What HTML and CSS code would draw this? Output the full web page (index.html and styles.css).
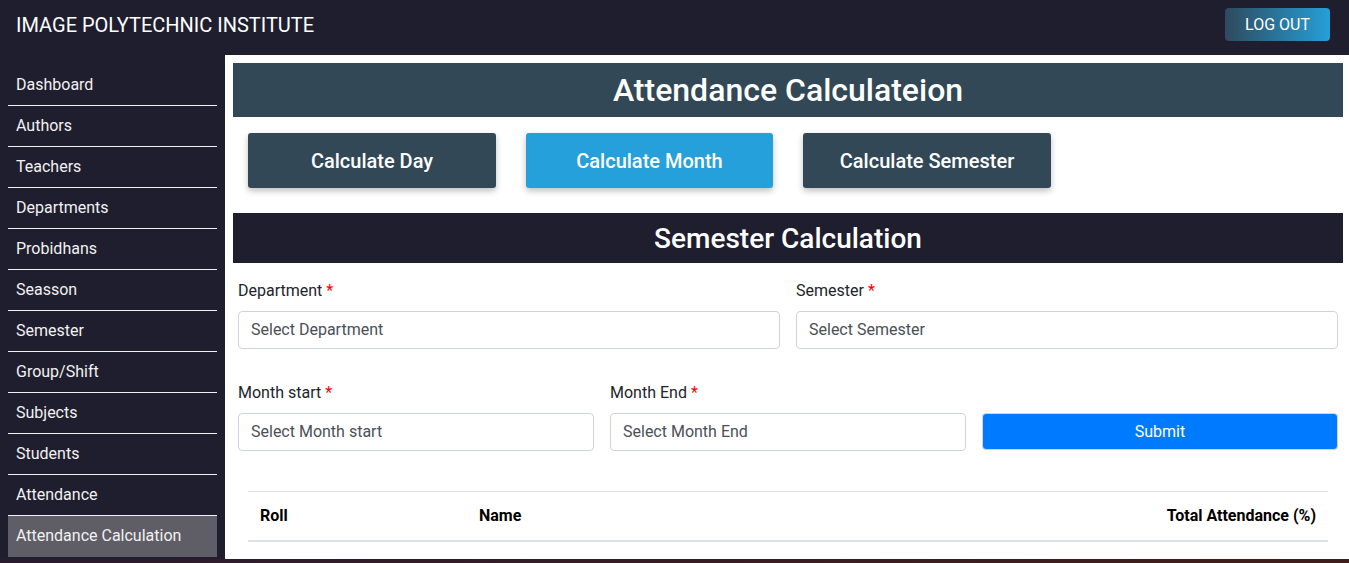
FILE: index.html
```html
<!DOCTYPE html>
<html lang="en">
<head>
<meta charset="utf-8">
<title>Attendance Calculation</title>
<link rel="stylesheet" href="styles.css">
</head>
<body>
<div class="app">
  <header class="topbar">
    <div class="brand">IMAGE POLYTECHNIC INSTITUTE</div>
    <button class="logout">LOG OUT</button>
  </header>
  <div class="body">
    <nav class="sidebar">
      <a class="nav-item">Dashboard</a>
      <a class="nav-item">Authors</a>
      <a class="nav-item">Teachers</a>
      <a class="nav-item">Departments</a>
      <a class="nav-item">Probidhans</a>
      <a class="nav-item">Seasson</a>
      <a class="nav-item">Semester</a>
      <a class="nav-item">Group/Shift</a>
      <a class="nav-item">Subjects</a>
      <a class="nav-item">Students</a>
      <a class="nav-item">Attendance</a>
      <a class="nav-item active">Attendance Calculation</a>
    </nav>
    <main class="main">
      <h1 class="page-title">Attendance Calculateion</h1>
      <div class="tabs">
        <button class="tab">Calculate Day</button>
        <button class="tab tab-active">Calculate Month</button>
        <button class="tab">Calculate Semester</button>
      </div>
      <h2 class="section-title">Semester Calculation</h2>
      <form class="form">
        <div class="row row-2">
          <div class="field">
            <label class="label">Department <span class="req">*</span></label>
            <div class="input">Select Department</div>
          </div>
          <div class="field">
            <label class="label">Semester <span class="req">*</span></label>
            <div class="input">Select Semester</div>
          </div>
        </div>
        <div class="row row-3">
          <div class="field">
            <label class="label">Month start <span class="req">*</span></label>
            <div class="input">Select Month start</div>
          </div>
          <div class="field">
            <label class="label">Month End <span class="req">*</span></label>
            <div class="input">Select Month End</div>
          </div>
          <div class="field field-end">
            <button type="button" class="submit">Submit</button>
          </div>
        </div>
      </form>
      <table class="table">
        <thead>
          <tr>
            <th class="col-roll">Roll</th>
            <th>Name</th>
            <th class="col-total">Total Attendance (%)</th>
          </tr>
        </thead>
      </table>
    </main>
  </div>
</div>
</body>
</html>
```

FILE: styles.css
```css
* { box-sizing: border-box; }
html, body { margin: 0; padding: 0; }
body {
  font-family: Roboto, "Liberation Sans", sans-serif;
  background: linear-gradient(to right, #2a1b2f, #3a1d22 60%, #401d19);
  height: 563px;
  overflow: hidden;
}
.app {
  height: 559px;
  background: #1f1e2e;
  display: flex;
  flex-direction: column;
}
.topbar {
  height: 55px;
  display: flex;
  align-items: center;
  justify-content: space-between;
  padding: 0 19px 0 16px;
}
.brand {
  color: #fff;
  font-size: 20px;
  margin-top: -6px;
}
.logout {
  margin-top: -7px;
  width: 105px;
  height: 33px;
  border: none;
  border-radius: 4px;
  background: linear-gradient(to right, #2f4a5e, #259fd8);
  color: #fff;
  font-family: inherit;
  font-size: 16px;
  padding: 0;
}
.body {
  flex: 1;
  display: flex;
  min-height: 0;
}
.sidebar {
  width: 225px;
  flex: none;
  padding: 10px 8px 0 8px;
  display: flex;
  flex-direction: column;
}
.nav-item {
  display: block;
  height: 41px;
  line-height: 40px;
  padding: 0 8px;
  color: #f1f1f1;
  font-size: 16px;
  border-bottom: 1px solid #f2f2f2;
}
.nav-item.active {
  background: #5f5e66;
  border-bottom: none;
}
.main {
  flex: 1;
  background: #fff;
  padding: 8px 6px 0 8px;
  overflow: hidden;
}
.page-title {
  margin: 0;
  height: 54px;
  background: #324856;
  color: #fff;
  font-size: 32px;
  font-weight: 500;
  display: flex;
  align-items: center;
  justify-content: center;
}
.tabs {
  display: flex;
  gap: 30px;
  padding: 16px 15px 0;
}
.tab {
  width: 248px;
  height: 55px;
  border: none;
  border-radius: 3px;
  background: #324856;
  color: #fff;
  font-family: inherit;
  font-size: 20px;
  font-weight: 500;
  box-shadow: 0 3px 6px rgba(0,0,0,0.25);
}
.tab-active { background: #26a0da; width: 247px; }
.section-title {
  margin: 25px 0 0;
  height: 50px;
  background: #1f1e2e;
  color: #fff;
  font-size: 28px;
  font-weight: 500;
  display: flex;
  align-items: center;
  justify-content: center;
}
.form {
  padding: 16px 5px 0;
}
.row {
  display: grid;
  gap: 16px;
}
.row-2 { grid-template-columns: 1fr 1fr; }
.row-3 { grid-template-columns: 1fr 1fr 1fr; margin-top: 32px; }
.field { display: flex; flex-direction: column; }
.field-end { justify-content: flex-end; }
.label {
  font-size: 16px;
  line-height: 24px;
  color: #212529;
  margin-bottom: 8px;
}
.req { color: #ff0000; }
.input {
  height: 38px;
  border: 1px solid #ced4da;
  border-radius: 4px;
  padding: 0 12px 2px;
  display: flex;
  align-items: center;
  font-size: 16px;
  color: #495057;
}
.submit {
  height: 37px;
  margin-bottom: 1px;
  border: 1px solid #cfd6de;
  border-radius: 4px;
  background: #007bff;
  color: #fff;
  font-family: inherit;
  font-size: 16px;
}
.table {
  margin: 40px 15px 0;
  width: calc(100% - 30px);
  border-collapse: collapse;
}
.table th {
  text-align: left;
  font-size: 16px;
  font-weight: 700;
  line-height: 24px;
  padding: 12px;
  color: #000;
  border-top: 1px solid #dee2e6;
  border-bottom: 2px solid #dee2e6;
}
.table .col-roll { width: 219px; }
.table .col-total { text-align: right; }
```
